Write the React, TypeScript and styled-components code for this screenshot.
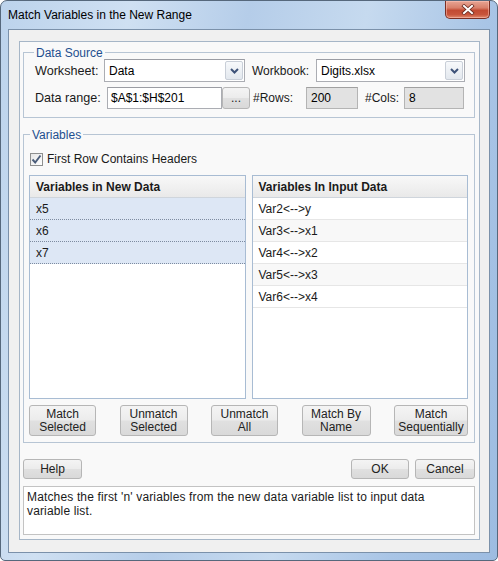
import React from 'react';
import styled, { createGlobalStyle } from 'styled-components';

const Global = createGlobalStyle`
  html, body { margin: 0; padding: 0; background: #fff; }
  body { font-family: "Liberation Sans", Arial, sans-serif; font-size: 12px; color: #000; }
  #root { width: 498px; height: 561px; }
  * { box-sizing: border-box; }
`;

const FONT = `"Liberation Sans", Arial, sans-serif`;
const GROUP_LINE = '#b7c5d4';

const Window = styled.div`
  width: 498px;
  height: 561px;
  display: flex;
  flex-direction: column;
  border: 1px solid #56687c;
  border-radius: 7px 7px 5px 5px;
  overflow: hidden;
  background: linear-gradient(100deg, #bcd3ec 0%, #cfe0f2 22%, #b5cde9 42%, #c6daef 62%, #a9c5e6 82%, #9dbce1 100%);
`;

const TitleBar = styled.div`
  height: 28px;
  display: flex;
  align-items: flex-start;
  justify-content: space-between;
  padding-left: 7px;
`;

const Title = styled.div`
  font: 12px/28px ${FONT};
  color: #000;
`;

const CloseButton = styled.div`
  width: 45px;
  height: 18px;
  margin-right: 7px;
  border: 1px solid #7a2f24;
  border-top: none;
  border-radius: 0 0 5px 5px;
  background: linear-gradient(#e7a594 0%, #d8806b 40%, #c24a32 55%, #c8553c 80%, #e08a6e 100%);
  display: flex;
  align-items: center;
  justify-content: center;
  box-shadow: inset 0 0 0 1px rgba(255, 200, 190, 0.5);
`;

const Client = styled.div`
  flex: 1;
  margin: 0 7px 7px 7px;
  border: 1px solid #7b91aa;
  background: #f0f0f0;
  padding: 11px 9px 12px 10px;
  display: flex;
  flex-direction: column;
`;

const Panel = styled.div`
  flex: 1;
  border: 1px solid #a6b6c7;
  background: #f9f9f9;
  padding: 5px 4px 4px 3px;
  display: flex;
  flex-direction: column;
`;

const Group = styled.div<{ $mt?: number }>`
  display: flex;
  flex-direction: column;
  margin-top: ${p => p.$mt ?? 0}px;
`;

const GroupHead = styled.div<{ $lead: number }>`
  height: 12px;
  display: flex;
  &::before {
    content: '';
    width: ${p => p.$lead}px;
    height: 6px;
    align-self: flex-end;
    border-top: 1px solid ${GROUP_LINE};
    border-left: 1px solid ${GROUP_LINE};
  }
  &::after {
    content: '';
    flex: 1;
    height: 6px;
    align-self: flex-end;
    border-top: 1px solid ${GROUP_LINE};
    border-right: 1px solid ${GROUP_LINE};
  }
`;

const Legend = styled.span`
  font: 12px/12px ${FONT};
  color: #1e4f8f;
  padding: 0 2px;
`;

const GroupBody = styled.div<{ $pad: string }>`
  border: 1px solid ${GROUP_LINE};
  border-top: none;
  padding: ${p => p.$pad};
  display: flex;
  flex-direction: column;
`;

const FieldRow = styled.div<{ $h: number; $mt?: number }>`
  height: ${p => p.$h}px;
  margin-top: ${p => p.$mt ?? 0}px;
  display: flex;
  align-items: stretch;
`;

const Label = styled.label<{ $w: number; $ml?: number; $big?: boolean }>`
  width: ${p => p.$w}px;
  margin-left: ${p => p.$ml ?? 0}px;
  display: flex;
  align-items: center;
  font: ${p => (p.$big ? 12.6 : 12)}px ${FONT};
  color: #1a1a1a;
  white-space: nowrap;
`;

const SelectBox = styled.div<{ $w: number }>`
  width: ${p => p.$w}px;
  border: 1px solid #abadb3;
  border-top-color: #9a9ca3;
  background: #fff;
  display: flex;
  align-items: stretch;
`;

const SelectValue = styled.div`
  flex: 1;
  display: flex;
  align-items: center;
  padding-left: 4px;
  font: 12px ${FONT};
  color: #000;
`;

const DropButton = styled.div`
  width: 18px;
  margin: 1px;
  border: 1px solid #c9cfd8;
  border-radius: 2px;
  background: linear-gradient(#f7f9fb, #e3e8ee);
  display: flex;
  align-items: center;
  justify-content: center;
`;

const TextInput = styled.div<{ $w: number; $ro?: boolean }>`
  width: ${p => p.$w}px;
  border: 1px solid ${p => (p.$ro ? '#b4b4b4' : '#abadb3')};
  border-top-color: ${p => (p.$ro ? '#a0a0a0' : '#9a9ca3')};
  background: ${p => (p.$ro ? '#e2e2e2' : '#fff')};
  display: flex;
  align-items: center;
  padding-left: ${p => (p.$ro ? 4 : 3)}px;
  font: 12px ${FONT};
  color: #000;
`;

const Button = styled.button<{ $w: number; $h?: number }>`
  width: ${p => p.$w}px;
  height: ${p => p.$h ?? 20}px;
  padding: 0;
  border: 1px solid #b6b6b6;
  border-radius: 3px;
  background: linear-gradient(#f4f4f4 0%, #ececec 48%, #e0e0e0 52%, #d9d9d9 100%);
  font: 12px/13px ${FONT};
  color: #222;
  text-align: center;
  white-space: pre-line;
`;

const CheckRow = styled.div`
  height: 16px;
  margin: 0 0 8px 1px;
  display: flex;
  align-items: center;
  gap: 4px;
  font: 12px ${FONT};
  color: #1a1a1a;
`;

const CheckBox = styled.span`
  width: 13px;
  height: 13px;
  border: 1px solid #8e8f8f;
  background: linear-gradient(135deg, #e6e6e6, #ffffff);
  display: flex;
  align-items: center;
  justify-content: center;
`;

const Lists = styled.div`
  height: 224px;
  display: grid;
  grid-template-columns: 1fr 1fr;
  gap: 6px;
`;

const List = styled.div`
  border: 1px solid #a8bcd3;
  background: #fff;
  display: flex;
  flex-direction: column;
`;

const ListHeader = styled.div`
  height: 22px;
  flex-shrink: 0;
  display: flex;
  align-items: center;
  padding-left: 6px;
  background: linear-gradient(#f8f8f8, #e9e9e9);
  border-bottom: 1px solid #cfd5dc;
  font: bold 12px ${FONT};
  color: #1a1a1a;
`;

const ListRow = styled.div<{ $kind: 'selected' | 'plain'; $alt?: boolean }>`
  height: 22px;
  flex-shrink: 0;
  display: flex;
  align-items: center;
  padding-left: 6px;
  font: 12px ${FONT};
  color: #1a1a1a;
  background: ${p => (p.$kind === 'selected' ? '#dde7f5' : p.$alt ? '#f8f8f8' : '#ffffff')};
  border-bottom: 1px ${p => (p.$kind === 'selected' ? 'dotted #7d8ba0' : 'solid #e6e6e6')};
`;

const ActionRow = styled.div`
  margin-top: 6px;
  display: flex;
  justify-content: space-between;
`;

const Footer = styled.div`
  margin-top: 16px;
  display: flex;
  align-items: center;
  gap: 6px;
`;

const Spacer = styled.div`
  flex: 1;
`;

const Description = styled.div`
  flex: 1;
  margin-top: 7px;
  border: 1px solid #c3c3c3;
  background: #fff;
  padding: 3px 3px;
  font: 12px/14px ${FONT};
  letter-spacing: 0.15px;
  color: #1a1a1a;
`;

const Chevron = () => (
  <svg width="9" height="6" viewBox="0 0 9 6">
    <polyline points="1,1 4.5,4.5 8,1" fill="none" stroke="#3e5379" strokeWidth="2" />
  </svg>
);

const Check = () => (
  <svg width="11" height="11" viewBox="0 0 11 11">
    <polyline points="1.5,5.5 4.2,8.5 9.5,1.5" fill="none" stroke="#4b5d7a" strokeWidth="1.9" />
  </svg>
);

const CloseX = () => (
  <svg width="14" height="11" viewBox="0 0 14 11">
    <g strokeLinecap="square">
      <line x1="3" y1="2" x2="11" y2="9" stroke="#6b2a20" strokeWidth="3.6" />
      <line x1="11" y1="2" x2="3" y2="9" stroke="#6b2a20" strokeWidth="3.6" />
      <line x1="3" y1="2" x2="11" y2="9" stroke="#ffffff" strokeWidth="2" />
      <line x1="11" y1="2" x2="3" y2="9" stroke="#ffffff" strokeWidth="2" />
    </g>
  </svg>
);

const newVars = ['x5', 'x6', 'x7'];
const inputVars = ['Var2<-->y', 'Var3<-->x1', 'Var4<-->x2', 'Var5<-->x3', 'Var6<-->x4'];
const actions: { label: string; w: number }[] = [
  { label: 'Match\nSelected', w: 67 },
  { label: 'Unmatch\nSelected', w: 68 },
  { label: 'Unmatch\nAll', w: 67 },
  { label: 'Match By\nName', w: 69 },
  { label: 'Match\nSequentially', w: 74 },
];

export default function App() {
  return (
    <>
      <Global />
      <Window>
        <TitleBar>
          <Title>Match Variables in the New Range</Title>
          <CloseButton>
            <CloseX />
          </CloseButton>
        </TitleBar>
        <Client>
          <Panel>
            <Group>
              <GroupHead $lead={10}>
                <Legend>Data Source</Legend>
              </GroupHead>
              <GroupBody $pad="0 9px 8px 11px">
                <FieldRow $h={23}>
                  <Label $w={69} $big>Worksheet:</Label>
                  <SelectBox $w={141}>
                    <SelectValue>Data</SelectValue>
                    <DropButton>
                      <Chevron />
                    </DropButton>
                  </SelectBox>
                  <Label $w={64} $ml={7}>Workbook:</Label>
                  <SelectBox $w={149}>
                    <SelectValue>Digits.xlsx</SelectValue>
                    <DropButton>
                      <Chevron />
                    </DropButton>
                  </SelectBox>
                </FieldRow>
                <FieldRow $h={22} $mt={5}>
                  <Label $w={72} $big>Data range:</Label>
                  <TextInput $w={115}>$A$1:$H$201</TextInput>
                  <Button $w={28} $h={22}>...</Button>
                  <Label $w={53} $ml={3}>#Rows:</Label>
                  <TextInput $w={52} $ro>200</TextInput>
                  <Label $w={39} $ml={7}>#Cols:</Label>
                  <TextInput $w={60} $ro>8</TextInput>
                </FieldRow>
              </GroupBody>
            </Group>

            <Group $mt={11}>
              <GroupHead $lead={6}>
                <Legend>Variables</Legend>
              </GroupHead>
              <GroupBody $pad="10px 6px 6px 5px">
                <CheckRow>
                  <CheckBox>
                    <Check />
                  </CheckBox>
                  First Row Contains Headers
                </CheckRow>
                <Lists>
                  <List>
                    <ListHeader>Variables in New Data</ListHeader>
                    {newVars.map(v => (
                      <ListRow key={v} $kind="selected">{v}</ListRow>
                    ))}
                  </List>
                  <List>
                    <ListHeader>Variables In Input Data</ListHeader>
                    {inputVars.map((v, i) => (
                      <ListRow key={v} $kind="plain" $alt={i % 2 === 1}>{v}</ListRow>
                    ))}
                  </List>
                </Lists>
                <ActionRow>
                  {actions.map(a => (
                    <Button key={a.label} $w={a.w} $h={31}>{a.label}</Button>
                  ))}
                </ActionRow>
              </GroupBody>
            </Group>

            <Footer>
              <Button $w={59}>Help</Button>
              <Spacer />
              <Button $w={58}>OK</Button>
              <Button $w={60}>Cancel</Button>
            </Footer>
            <Description>
              Matches the first 'n' variables from the new data variable list to input data variable list.
            </Description>
          </Panel>
        </Client>
      </Window>
    </>
  );
}
